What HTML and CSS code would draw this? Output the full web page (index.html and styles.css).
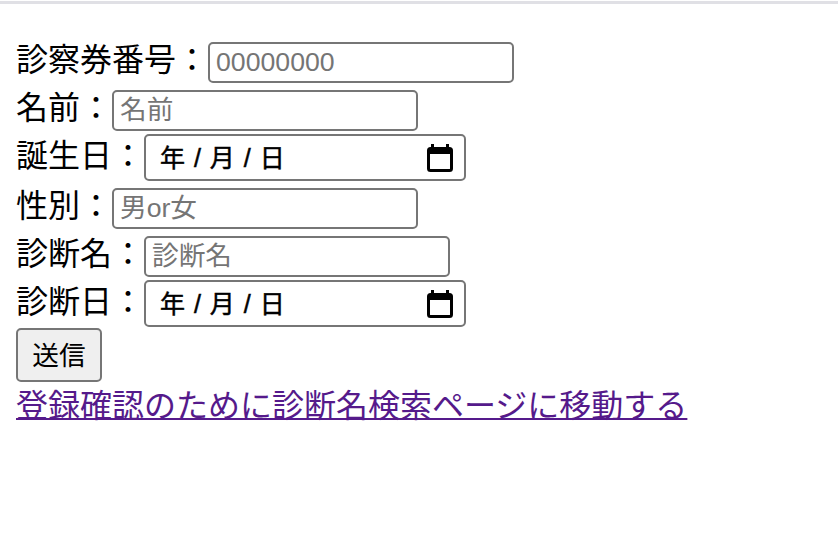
FILE: index.html
```html
<!DOCTYPE html>
<html lang="ja">
<head>
    <meta charset="UTF-8">
    <meta name="viewport" content="width=device-width, initial-scale=1.0">
    <title>診断登録</title>
    <link rel="stylesheet" href="styles.css">
</head>
<body>
    <div class="top-line"></div>
    <form class="patient-form">
        <div class="form-row">
            <label>診察券番号：</label>
            <input type="text" class="text-input" placeholder="00000000">
        </div>
        <div class="form-row before-date">
            <label>名前：</label>
            <input type="text" class="text-input" placeholder="名前">
        </div>
        <div class="form-row date-row">
            <label>誕生日：</label>
            <div class="date-input">
                <span class="date-parts">年 / 月 / 日</span>
                <svg class="calendar-icon" viewBox="0 0 26 28" width="26" height="28">
                    <path d="M4 0h3v3h12V0h3v3h0.500A3.500 3.500 0 0 1 26 6.500v18a3.500 3.500 0 0 1-3.500 3.500h-19A3.500 3.500 0 0 1 0 24.500v-18A3.500 3.500 0 0 1 3.500 3H4z M3 10v14.500A0.500 0.500 0 0 0 3.500 25h19a0.500 0.500 0 0 0 0.500-0.500V10z" fill-rule="evenodd"/>
                </svg>
            </div>
        </div>
        <div class="form-row">
            <label>性別：</label>
            <input type="text" class="text-input" placeholder="男or女">
        </div>
        <div class="form-row before-date">
            <label>診断名：</label>
            <input type="text" class="text-input" placeholder="診断名">
        </div>
        <div class="form-row date-row">
            <label>診断日：</label>
            <div class="date-input">
                <span class="date-parts">年 / 月 / 日</span>
                <svg class="calendar-icon" viewBox="0 0 26 28" width="26" height="28">
                    <path d="M4 0h3v3h12V0h3v3h0.500A3.500 3.500 0 0 1 26 6.500v18a3.500 3.500 0 0 1-3.500 3.500h-19A3.500 3.500 0 0 1 0 24.500v-18A3.500 3.500 0 0 1 3.500 3H4z M3 10v14.500A0.500 0.500 0 0 0 3.500 25h19a0.500 0.500 0 0 0 0.500-0.500V10z" fill-rule="evenodd"/>
                </svg>
            </div>
        </div>
        <button type="button" class="send-btn">送信</button>
    </form>
    <a class="search-link" href="#">登録確認のために診断名検索ページに移動する</a>
</body>
</html>
```

FILE: styles.css
```css
body {
    margin: 0;
    padding: 0;
    background: #fff;
    color: #000;
    font-family: "Liberation Sans", "Noto Sans CJK JP", sans-serif;
    font-size: 32px;
}

.top-line {
    height: 3px;
    margin-top: 1px;
    background: #e0e0e5;
}

.patient-form {
    padding: 38px 0 0 16px;
}

.form-row {
    display: flex;
    align-items: flex-start;
    height: 48px;
}

.form-row.before-date {
    height: 44px;
}

.form-row.date-row + .form-row {
    margin-top: 6px;
}

.form-row label {
    line-height: 36px;
}

.form-row.date-row label {
    margin-top: 4px;
}

.text-input {
    box-sizing: border-box;
    width: 306px;
    height: 41px;
    padding: 2px 6px;
    border: 2px solid #767676;
    border-radius: 5px;
    background: #fff;
    color: #000;
    font-family: inherit;
    font-size: 26.67px;
    outline: none;
}

.text-input::placeholder {
    color: #757575;
    opacity: 1;
}

.date-input {
    box-sizing: border-box;
    display: flex;
    align-items: center;
    justify-content: space-between;
    width: 322px;
    height: 47px;
    padding: 0 11px 0 14px;
    border: 2px solid #767676;
    border-radius: 5px;
    font-size: 25px;
}

.date-parts {
    margin-top: -3px;
    word-spacing: 2px;
    -webkit-text-stroke: 0.5px #000;
}

.send-btn {
    display: block;
    box-sizing: border-box;
    width: 86px;
    height: 54px;
    padding: 0 0 4px;
    border: 2px solid #767676;
    border-radius: 5px;
    background: #efefef;
    color: #000;
    font-family: inherit;
    font-size: 26.67px;
}

.search-link {
    display: inline-block;
    margin: 5px 0 0 16px;
    color: #551a8b;
    line-height: 38px;
    text-decoration-thickness: 2px;
}
```
